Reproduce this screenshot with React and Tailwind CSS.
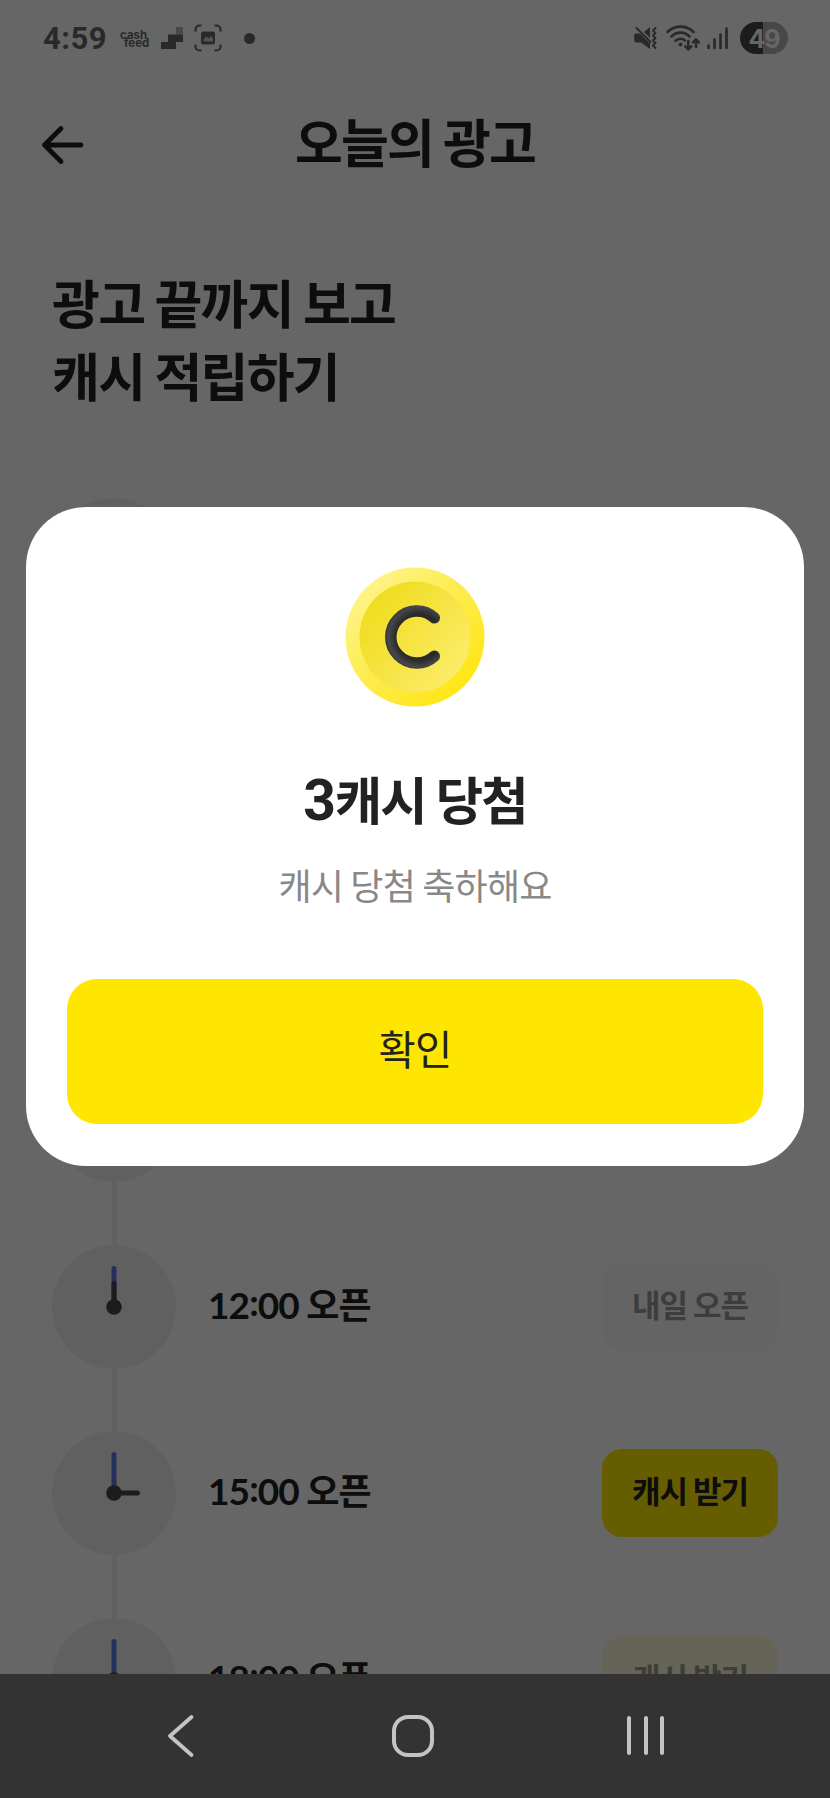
import React from "react";

const SLOTS = [
  { time: "00:00", angle: 0, label: "내일 오픈", state: "closed" },
  { time: "03:00", angle: 90, label: "내일 오픈", state: "closed" },
  { time: "06:00", angle: 180, label: "내일 오픈", state: "closed" },
  { time: "09:00", angle: 270, label: "내일 오픈", state: "closed" },
  { time: "12:00", angle: 0, label: "내일 오픈", state: "closed" },
  { time: "15:00", angle: 90, label: "캐시 받기", state: "open" },
  { time: "18:00", angle: 180, label: "캐시 받기", state: "waiting" },
];

const BUTTON_STYLES = {
  closed: "bg-[#fafafa] text-[#999999]",
  open: "bg-[#ffe600] text-[#222222]",
  waiting: "bg-[#fffad9] text-[#9c9b90]",
};

const StatusBar = () => (
  <div className="flex h-[76px] items-center justify-between pl-[43px] pr-[42px] text-[#686868]">
    <div className="flex items-center">
      <span className="w-[77px] pt-px font-['Roboto',sans-serif] text-[31px] leading-none font-bold tracking-[0.5px]">
        4:59
      </span>
      <div className="w-[41px] pt-px font-['Inter',sans-serif] text-[11.5px] leading-[8px] font-bold">
        <p>cash</p>
        <p className="pl-[4px]">feed</p>
      </div>
      <svg width="22" height="22" viewBox="0 0 22 22" fill="currentColor">
        <path d="M0 15h7V7.500h15V15h-7v7H0z" />
        <path d="M15 0h7v7.500h-7z" opacity=".5" />
      </svg>
      <svg className="ml-[11px]" width="28" height="28" viewBox="0 0 28 28" fill="none">
        <path
          d="M1.500 7.500v-2a4 4 0 0 1 4-4h2M20.500 1.500h2a4 4 0 0 1 4 4v2M26.500 20.500v2a4 4 0 0 1-4 4h-2M7.500 26.500h-2a4 4 0 0 1-4-4v-2"
          stroke="currentColor"
          strokeWidth="2.200"
        />
        <rect x="7" y="7.500" width="14" height="13" rx="2.500" fill="currentColor" />
        <path d="M9.500 17.500v-2l3-3 2 2 2.500-2.500 2 2.500v3z" fill="#ffffff" opacity=".7" />
      </svg>
      <span className="ml-[22px] size-[11px] rounded-full bg-current" />
    </div>

    <div className="flex items-center">
      <svg width="24" height="24" viewBox="0 0 24 24" fill="none">
        <path d="M2 7.500h4L16 17.500V23l-9-6.500H2A1.800 1.800 0 0 1 .2 14.700V9.300A1.800 1.800 0 0 1 2 7.500z" fill="currentColor" />
        <path d="M10 6l6-5v11z" fill="currentColor" />
        <path d="M2.500 2l14 14" stroke="currentColor" strokeWidth="2" strokeLinecap="round" />
        <path
          d="M21.500 2l-2.500 2.500 2.500 2.500-2.500 2.500 2.500 2.500-2.500 2.500 2.500 2.500-2.500 2.500 2.500 2.500"
          stroke="currentColor"
          strokeWidth="2"
          strokeLinecap="round"
          strokeLinejoin="round"
        />
      </svg>
      <svg
        className="ml-[8px]"
        width="34"
        height="28"
        viewBox="0 0 34 28"
        fill="none"
        stroke="currentColor"
        strokeWidth="2.600"
        strokeLinecap="round"
      >
        <path d="M1.500 8a18.500 18.500 0 0 1 26 0M5.500 12.500a12.500 12.500 0 0 1 18 0M9.500 16.800a7 7 0 0 1 9.500-.4" />
        <circle cx="14.500" cy="20.500" r="1.900" fill="currentColor" stroke="none" />
        <path d="M22.300 17v8M19.300 22.300l3 3 3-3M30 23v-7.500M27 18.300l3-3 3 3" strokeLinejoin="round" />
      </svg>
      <svg
        className="ml-[7px]"
        width="21"
        height="24"
        viewBox="0 0 21 24"
        stroke="currentColor"
        strokeWidth="2.700"
        strokeLinecap="round"
      >
        <path d="M1.500 19.500v2.500M7.500 13.500v8.500M13.500 8.500v13.500M19.500 2.500v19.500" />
      </svg>
      <div className="ml-[12px] flex h-[32px] w-[48px] items-center justify-center rounded-full bg-linear-to-r from-[#464646] from-48% to-[#b4b4b4] to-48% pt-[2px] font-['Inter',sans-serif] text-[25px] leading-none font-bold tracking-[-1px] text-white">
        49
      </div>
    </div>
  </div>
);

const ClockFace = ({ angle }) => (
  <svg className="size-[124px] shrink-0" viewBox="0 0 124 124" fill="none">
    <circle cx="62" cy="62" r="62" fill="#f1f1f1" />
    <path d="M62 23.500V62" stroke="#5c78e1" strokeWidth="5" strokeLinecap="round" />
    <path
      d="M62 62V38.500"
      stroke="#464646"
      strokeWidth="5"
      strokeLinecap="round"
      transform={`rotate(${angle} 62 62)`}
    />
    <circle cx="62" cy="62" r="7.800" fill="#464646" />
  </svg>
);

const SlotTime = ({ time }) => {
  const [hour, minute] = time.split(":");

  return (
    <p className="ml-[32px] flex-1 pb-[6px] font-['Lato','Noto_Sans_CJK_KR',sans-serif] text-[37px] leading-none font-bold tracking-[-0.9px] text-[#222222]">
      {hour}
      <span className="relative -top-[3px]">:</span>
      {minute}
      <span className="font-['Noto_Sans_CJK_KR',sans-serif] text-[36px] tracking-[-0.8px]"> 오픈</span>
    </p>
  );
};

const SlotRow = ({ slot }) => (
  <li className="flex h-[186.7px] flex-col">
    <div className="flex h-[124px] shrink-0 items-center">
      <ClockFace angle={slot.angle} />
      <SlotTime time={slot.time} />
      <button
        className={`h-[88px] w-[176px] rounded-[20px] pb-[6px] text-[31px] font-bold tracking-[-1px] ${BUTTON_STYLES[slot.state]}`}
      >
        {slot.label}
      </button>
    </div>
    <span className="ml-[59.500px] w-[5px] flex-1 bg-[#f1f1f1]" />
  </li>
);

const Coin = () => (
  <svg className="size-[140px]" viewBox="0 0 140 140" fill="none">
    <defs>
      <linearGradient id="rim" x1="20" y1="20" x2="120" y2="120" gradientUnits="userSpaceOnUse">
        <stop offset="0" stopColor="#fff387" />
        <stop offset="0.450" stopColor="#fdec50" />
        <stop offset="1" stopColor="#ffe614" />
      </linearGradient>
      <linearGradient id="face" x1="25" y1="35" x2="112" y2="108" gradientUnits="userSpaceOnUse">
        <stop offset="0" stopColor="#f0dc1e" />
        <stop offset="1" stopColor="#fbec68" />
      </linearGradient>
      <radialGradient id="ink" cx="74" cy="70" r="38" gradientUnits="userSpaceOnUse">
        <stop offset="0.600" stopColor="#2a2a28" />
        <stop offset="0.800" stopColor="#47474a" />
        <stop offset="1" stopColor="#242422" />
      </radialGradient>
    </defs>
    <circle cx="70" cy="70" r="69.500" fill="url(#rim)" />
    <circle cx="70" cy="70" r="55.500" fill="url(#face)" />
    <path
      d="M89.300 50.800A26 26 0 1 0 89.300 89.200"
      stroke="url(#ink)"
      strokeWidth="11.500"
      strokeLinecap="round"
    />
  </svg>
);

const RewardDialog = () => (
  <div className="flex h-[659px] w-[778px] flex-col items-center rounded-[60px] bg-white px-[41px] pt-[59.500px] pb-[42px]">
    <Coin />
    <h3 className="mt-[54.500px] h-[74px] text-[51.5px] leading-[74px] font-bold tracking-[-1.8px] text-[#222222]">
      <span className="font-['Roboto',sans-serif] text-[57px] tracking-[-1.2px]">3</span>캐시 당첨
    </h3>
    <p className="mt-[23px] text-[36px] leading-[52px] tracking-[-0.8px] text-[#888888]">
      캐시 당첨 축하해요
    </p>
    <button className="mt-auto h-[145px] w-full rounded-[30px] bg-[#ffe600] pb-[7px] text-[40.5px] tracking-[-0.8px] text-[#222222]">
      확인
    </button>
  </div>
);

const NavigationBar = () => (
  <nav className="flex h-[124.500px] shrink-0 items-center bg-[#333333] pl-[167px] text-[#c4c4c4]">
    <svg width="28" height="44" viewBox="0 0 28 44" fill="none">
      <path d="M24.500 3L3 22l21.500 19" stroke="currentColor" strokeWidth="3.800" strokeLinecap="round" strokeLinejoin="round" />
    </svg>
    <span className="ml-[197px] size-[42px] rounded-[16px] border-4 border-current" />
    <div className="ml-[193px] flex gap-[12.500px]">
      <span className="h-[39px] w-[4px] rounded-full bg-current" />
      <span className="h-[39px] w-[4px] rounded-full bg-current" />
      <span className="h-[39px] w-[4px] rounded-full bg-current" />
    </div>
  </nav>
);

export default function App() {
  return (
    <div className="flex h-[1798px] w-[830px] flex-col overflow-hidden bg-white font-['Noto_Sans_CJK_KR',sans-serif]">
      <main className="relative min-h-0 flex-1 overflow-hidden">
        <StatusBar />
        <header className="flex h-[138px] items-center px-[41px] text-[#222222]">
          <svg width="43" height="40" viewBox="0 0 43 40" fill="none">
            <path d="M20 3.500L3.500 20 20 36.500M3.500 20H40" stroke="currentColor" strokeWidth="4.800" strokeLinecap="round" strokeLinejoin="round" />
          </svg>
          <h1 className="flex-1 pr-[43px] pb-[9px] text-center text-[52px] leading-none font-bold tracking-[-1.8px]">
            오늘의 광고
          </h1>
        </header>
        <h2 className="mt-[51px] h-[233px] px-[52px] text-[52px] leading-[73px] font-bold tracking-[-1.7px] text-[#222222]">
          광고 끝까지 보고
          <br />
          캐시 적립하기
        </h2>
        <ul className="pr-[52px] pl-[52px]">
          {SLOTS.map((slot) => (
            <SlotRow key={slot.time} slot={slot} />
          ))}
        </ul>

        <div className="absolute inset-0 flex items-center justify-center bg-black/60">
          <RewardDialog />
        </div>
      </main>
      <NavigationBar />
    </div>
  );
}
